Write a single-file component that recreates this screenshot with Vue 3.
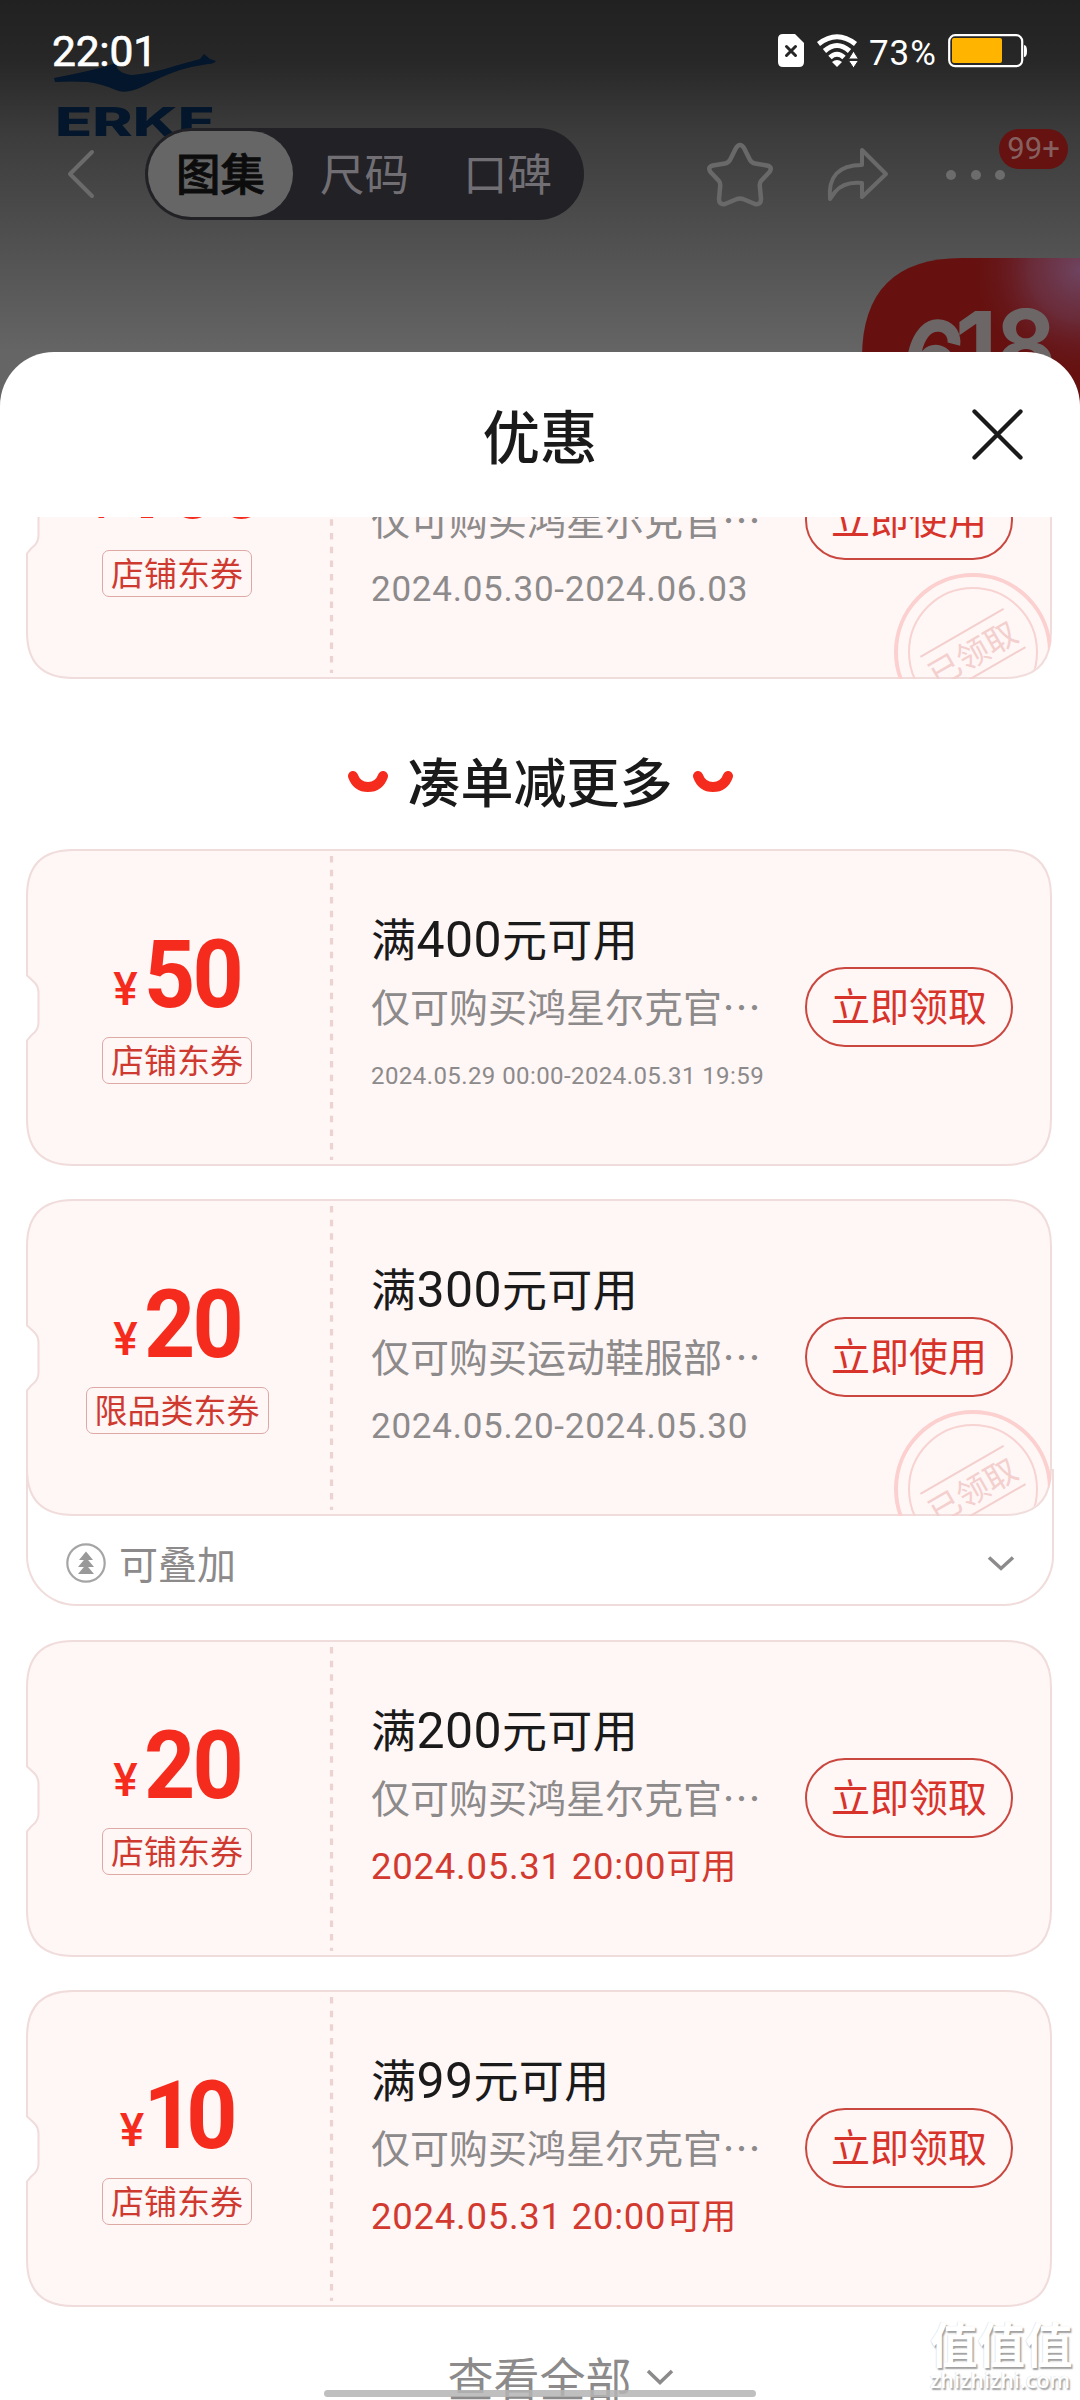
<script setup>
const store = '店铺东券'
const shopDesc = '仅可购买鸿星尔克官…'

const claimed = {
  amount: '100', tag: store, min: '500', desc: shopDesc,
  date: '2024.05.30-2024.06.03', kind: 'range', action: '立即使用', stamped: true,
}

const coupons = [
  { amount: '50', tag: store, min: '400', desc: shopDesc, date: '2024.05.29 00:00-2024.05.31 19:59', kind: 'small', action: '立即领取' },
  { amount: '20', tag: '限品类东券', min: '300', desc: '仅可购买运动鞋服部…', date: '2024.05.20-2024.05.30', kind: 'range', action: '立即使用', stamped: true, stack: '可叠加' },
  { amount: '20', tag: store, min: '200', desc: shopDesc, date: '2024.05.31 20:00', suffix: '可用', kind: 'soon', action: '立即领取' },
  { amount: '10', tag: store, min: '99', desc: shopDesc, date: '2024.05.31 20:00', suffix: '可用', kind: 'soon', action: '立即领取' },
]

const groups = [
  { items: [claimed], first: true },
  { title: '凑单减更多', items: coupons },
]
</script>

<template>
  <div class="screen" lang="zh-CN">
    <svg class="brand" width="170" height="90" viewBox="0 0 170 90">
      <path d="M4 27Q30 22 50 17L66 12Q66 22 82 24Q104 22 128 14L150 8L154 3L160 8L166 10Q164 13 158 13Q144 15 130 19Q112 25 96 34Q86 39 80 40Q72 42 66 39Q52 33 38 31Q20 30 5 31Z" />
      <text x="5" y="85" textLength="160" lengthAdjust="spacingAndGlyphs">ERKE</text>
    </svg>

    <div class="promo">
      <svg width="218" height="146" viewBox="0 0 218 146">
        <defs>
          <radialGradient id="promoGlow" cx="218" cy="12" r="110" gradientUnits="userSpaceOnUse">
            <stop offset="0" stop-color="#6e4460" />
            <stop offset=".45" stop-color="#6b3040" stop-opacity=".85" />
            <stop offset="1" stop-color="#661110" stop-opacity="0" />
          </radialGradient>
        </defs>
        <path d="M0 146V100Q0 0 100 0H218V146Z" fill="#661110" />
        <path d="M0 146V100Q0 0 100 0H218V146Z" fill="url(#promoGlow)" />
        <g class="promo-num">
          <text transform="translate(34 124) rotate(15) scale(.9 1)">6</text>
          <text transform="translate(93 124)">1</text>
          <text transform="translate(134 122) scale(.94 1)">8</text>
        </g>
      </svg>
    </div>

    <header class="hero">
      <div class="status">
        <span class="clock">22:01</span>
        <div class="indicators">
          <svg width="26" height="34" viewBox="0 0 26 34">
            <path d="M5 0H17L26 9V28Q26 33 21 33H5Q0 33 0 28V5Q0 0 5 0Z" fill="#fff" />
            <path d="M8.500 12.500L17.500 21.500M17.500 12.500L8.500 21.500" stroke="#262626" stroke-width="3" stroke-linecap="round" />
          </svg>
          <svg class="wifi" width="41" height="34" viewBox="0 0 41 34">
            <g fill="none" stroke="#fff" stroke-width="5">
              <path d="M1.500 10Q20 -4.500 38.500 10" />
              <path d="M7.500 17Q20 6 32.500 17" />
              <path d="M13 23.500Q20 17 27 23.500" />
            </g>
            <path d="M15 28Q20 24 25 28L20 33Z" fill="#fff" />
            <path d="M31.500 25L36.500 17L41.500 25ZM31.500 26.500H41.500L36.500 34Z" fill="#fff" stroke="#292929" />
          </svg>
          <span class="pct">73%</span>
          <svg width="80" height="34" viewBox="0 0 80 34">
            <rect x="1.200" y="1.200" width="73" height="31" rx="6" fill="none" stroke="#fff" stroke-width="2.200" />
            <rect x="4" y="4" width="50" height="25" rx="2" fill="#ffb400" />
            <path d="M76 11Q79 11 79 17Q79 23 76 23Z" fill="#fff" />
          </svg>
        </div>
      </div>

      <nav class="bar">
        <svg class="back" width="28" height="50" viewBox="0 0 28 50">
          <path d="M25 3L3 25L25 47" fill="none" stroke="#6b6b6b" stroke-width="4" stroke-linecap="round" stroke-linejoin="round" />
        </svg>
        <div class="tabs">
          <span class="tab on">图集</span>
          <span class="tab">尺码</span>
          <span class="tab">口碑</span>
        </div>
        <svg class="star" width="68" height="66" viewBox="0 0 68 66">
          <path d="M30 6Q34 0 38 6L44 18Q46 21 49 21.500L61 23.500Q67 25 63.500 30L55 39Q53.500 41 53.800 44L55 57Q55 63 49 62L37 57Q34 56 31 57L19 62Q13 63 13 57L14.200 44Q14.500 41 13 39L4.500 30Q1 25 7 23.500L19 21.500Q22 21 24 18Z" fill="none" stroke="#696969" stroke-width="4.500" stroke-linejoin="round" />
        </svg>
        <svg class="share" width="64" height="56" viewBox="0 0 64 56">
          <path d="M36 3L60 27L36 50V36Q18 34 9 45L4 52Q1 18 36 18Z" fill="none" stroke="#696969" stroke-width="4" stroke-linejoin="round" />
        </svg>
        <div class="more">
          <i></i><i></i><i></i>
          <b class="count">99+</b>
        </div>
      </nav>
    </header>

    <section class="sheet">
      <div class="sheet-head">
        <h1>优惠</h1>
        <svg class="close" width="54" height="54" viewBox="0 0 54 54">
          <path d="M4.500 4.500L50.500 50.500M50.500 4.500L4.500 50.500" stroke="#1a1a1a" stroke-width="4.300" stroke-linecap="round" />
        </svg>
      </div>

      <div class="list">
        <div v-for="(g, gi) in groups" :key="gi" class="group" :class="{ first: g.first }">
          <h2 v-if="g.title">
            <svg width="42" height="22" viewBox="0 0 42 22"><path d="M6 5Q10 16 21 16Q32 16 36 5" /></svg>
            <span>{{ g.title }}</span>
            <svg width="42" height="22" viewBox="0 0 42 22"><path d="M6 5Q10 16 21 16Q32 16 36 5" /></svg>
          </h2>
          <div v-for="(c, i) in g.items" :key="i" class="wrap" :class="{ stacked: c.stack }">
            <article class="coupon">
              <svg class="shape" width="1026" height="317" viewBox="0 0 1026 317">
                <path d="M47 1H979Q1025 1 1025 47V270Q1025 316 979 316H47Q1 316 1 270V191.500Q5 186 9 183Q12.500 179 12.500 173V144Q12.500 138 9 134Q5 130 1 126.500V47Q1 1 47 1Z" fill="#fff6f6" stroke="#f0dcdb" stroke-width="2" />
                <path d="M305.500 7V311" stroke="#ecd3d0" stroke-width="3.200" stroke-dasharray="6.500 7.170" />
              </svg>
              <div v-if="c.stamped" class="stamp-clip">
                <svg class="stamp" width="160" height="160" viewBox="-80 -80 160 160">
                  <circle r="77" stroke="#fbd0ce" stroke-width="4" />
                  <circle r="64" stroke="#f7d3d1" stroke-width="2" />
                  <g transform="rotate(-30)">
                    <path d="M-48 -22H48M-48 22H48" stroke="#f3cfcd" stroke-width="2" />
                    <text x="-1" y="13" text-anchor="middle">已领取</text>
                  </g>
                </svg>
              </div>
              <div class="left">
                <div class="price">
                  <span class="yen">¥</span><span class="num" :class="'n' + c.amount">{{ c.amount }}</span>
                </div>
                <span class="tag">{{ c.tag }}</span>
              </div>
              <div class="info">
                <div class="cond">满<span>{{ c.min }}</span>元可用</div>
                <div class="desc">{{ c.desc }}</div>
                <div class="date" :class="c.kind">{{ c.date }}<em v-if="c.suffix">{{ c.suffix }}</em></div>
              </div>
              <button>{{ c.action }}</button>
            </article>
            <div v-if="c.stack" class="stack">
              <svg width="40" height="40" viewBox="0 0 40 40">
                <circle cx="20" cy="20" r="18.700" fill="none" stroke="#a5a5a5" stroke-width="2.200" />
                <path d="M20 8.500L27 17H13ZM20 14.500L28 24H12ZM20 21.500L28 31H12Z" fill="#999" />
              </svg>
              <span>{{ c.stack }}</span>
              <svg class="down" width="28" height="17" viewBox="0 0 28 17"><path d="M2 2.500L14 13.500L26 2.500" /></svg>
            </div>
          </div>
        </div>
        <div class="all">
          <span>查看全部</span>
          <svg width="28" height="17" viewBox="0 0 28 17"><path d="M2 2L14 13.500L26 2" /></svg>
        </div>
      </div>
    </section>

    <div class="home"></div>
    <div class="mark">
      <div class="mark-cn">值值值</div>
      <div class="mark-en">zhizhizhi.com</div>
    </div>
  </div>
</template>

<style>
body {
  margin: 0;
  background: #fff;
}
</style>

<style scoped>
.screen {
  position: relative;
  display: flex;
  flex-direction: column;
  width: 1080px;
  height: 2400px;
  overflow: hidden;
  background: linear-gradient(#212121 0, #272727 60px, #3b3b3b 130px, #4c4c4c 220px, #656565 352px, #666 420px);
  font-family: Roboto, "Noto Sans CJK SC", sans-serif;
  color: #1a1a1a;
}
.brand {
  position: absolute;
  left: 50px;
  top: 51px;
}
.brand path, .brand text { fill: #03162b; }
.brand text {
  font: 800 39px Inter, sans-serif;
}
.promo {
  position: absolute;
  left: 862px;
  top: 258px;
}
.promo svg { display: block; }
.promo-num {
  font: 700 98px Inter, sans-serif;
  fill: #6c6666;
}
.hero {
  position: relative;
  height: 352px;
  flex: none;
}
.status {
  display: flex;
  justify-content: space-between;
  align-items: center;
  height: 68px;
  padding: 17px 52px 0;
  box-sizing: border-box;
  margin-bottom: 60px;
}
.clock {
  font-size: 42.500px;
  line-height: 50px;
  letter-spacing: -.2px;
  font-weight: 400;
  -webkit-text-stroke: .7px #fff;
  color: #fff;
  padding-top: 18px;
}
.indicators {
  display: flex;
  align-items: center;
  padding-top: 16px;
}
.wifi { margin-left: 13px; }
.pct {
  width: 79px;
  color: #fff;
  font-size: 35px;
  line-height: 34px;
  padding-top: 7px;
  margin-left: 11px;
  letter-spacing: .9px;
}
.bar {
  display: flex;
  align-items: center;
  height: 92px;
  padding-left: 67px;
}
.tabs {
  display: flex;
  align-items: center;
  box-sizing: border-box;
  width: 439px;
  height: 92px;
  margin-left: 50px;
  padding: 0 3px;
  border-radius: 46px;
  background: #222126;
}
.tab {
  width: 143px;
  height: 86px;
  text-align: center;
  font-size: 44.500px;
  line-height: 91px;
  color: #716f74;
}
.tab.on {
  width: 145px;
  border-radius: 43px;
  background: #666;
  color: #0c0c0c;
  font-weight: 500;
  -webkit-text-stroke: .8px #0c0c0c;
}
.star { margin: 2px 0 0 122px; }
.share { margin: 2px 0 0 52px; }
.more {
  position: relative;
  display: flex;
  gap: 14.500px;
  margin-left: 56px;
  margin-top: 1px;
}
.more i {
  width: 10px;
  height: 10px;
  border-radius: 50%;
  background: #6c6c6c;
}
.count {
  position: absolute;
  left: 53px;
  bottom: 11px;
  width: 69px;
  height: 40px;
  border-radius: 20px;
  background: #651211;
  color: #85605f;
  font: 400 31px/40px Roboto, sans-serif;
  text-align: center;
}
.sheet {
  position: relative;
  flex: 1;
  min-height: 0;
  display: flex;
  flex-direction: column;
  border-radius: 54px 54px 0 0;
  background: #fff;
}
.sheet-head {
  position: relative;
  height: 165px;
  flex: none;
}
h1 {
  margin: 0;
  padding-top: 46px;
  text-align: center;
  font-size: 57.500px;
  line-height: 84px;
  font-weight: 500;
}
.close {
  position: absolute;
  left: 970px;
  top: 55px;
}
.list {
  flex: 1;
  min-height: 0;
  overflow: hidden;
  padding: 0 28px 0 26px;
}
.group.first { margin-top: -155px; }
h2 {
  display: flex;
  justify-content: center;
  align-items: center;
  height: 170px;
  margin: 0;
  padding-left: 2px;
  font-size: 53px;
  line-height: 70px;
  font-weight: 500;
  gap: 19px;
}
h2 span { margin-top: 41px; }
h2 svg { margin-top: 35px; }
h2 svg path {
  fill: none;
  stroke: #f52c1d;
  stroke-width: 10;
  stroke-linecap: round;
}
.wrap { margin-bottom: 33px; }
.group.first .wrap { margin-bottom: 0; }
.stacked {
  position: relative;
  margin-bottom: 34px;
}
.stacked::after {
  content: "";
  position: absolute;
  left: 0;
  right: -2px;
  top: 270px;
  bottom: 0;
  box-sizing: border-box;
  border: 2px solid #f0dcdb;
  border-top: 0;
  border-radius: 0 0 50px 50px;
}
.coupon {
  position: relative;
  display: flex;
  height: 317px;
}
.shape {
  position: absolute;
  inset: 0;
}
.stamp-clip {
  position: absolute;
  inset: 0;
  overflow: hidden;
  border-radius: 46px;
}
.stamp {
  position: absolute;
  left: 867px;
  top: 210px;
  fill: none;
}
.stamp text {
  fill: #f3cfcd;
  font-size: 32px;
}
.left {
  position: relative;
  width: 302px;
  display: flex;
  flex-direction: column;
  align-items: center;
}
.price {
  display: flex;
  align-items: baseline;
  height: 102px;
  margin-top: 86px;
  color: #f52c1d;
  line-height: 80px;
}
.first .price {
  height: 104px;
  margin-top: 84px;
}
.yen {
  position: relative;
  top: -2px;
  font-size: 46px;
  font-weight: 500;
  margin-right: 2px;
}
.first .yen { top: 0; }
.num {
  font-size: 94px;
  font-weight: 700;
  letter-spacing: -3px;
  margin-left: -1px;
  transform: scaleX(.95);
  transform-origin: right;
}
.n10 {
  letter-spacing: -9px;
  margin: 0 5px 0 -7px;
}
.n100 {
  letter-spacing: -1.500px;
  margin-left: -8px;
  transform: scaleX(.93);
}
.tag {
  box-sizing: border-box;
  height: 47px;
  padding: 0 8px;
  border: 1px solid #dda9a5;
  border-radius: 7px;
  color: #cf3a30;
  font-size: 33px;
  line-height: 47px;
}
.info {
  position: relative;
  width: 433px;
  margin-left: 43px;
  white-space: nowrap;
}
.cond {
  margin-top: 57px;
  height: 65px;
  line-height: 68px;
  font-size: 45px;
  letter-spacing: .4px;
}
.cond span { font-size: 50px; }
.desc {
  height: 71px;
  line-height: 68px;
  font-family: "Noto Sans CJK SC", sans-serif;
  font-size: 39px;
  color: #8c8a8a;
}
.date {
  height: 68px;
  line-height: 68px;
  color: #8c8a8a;
}
.range { font-size: 35px; letter-spacing: .75px; padding-top: 1px; }
.small { font-size: 24px; letter-spacing: .42px; }
.soon { font-size: 36.500px; letter-spacing: .75px; color: #d2392f; }
.soon em { font-style: normal; font-size: 35px; letter-spacing: 0; }
button {
  position: relative;
  box-sizing: border-box;
  width: 208px;
  height: 80px;
  margin: 118px 0 0 1px;
  padding: 0 0 6px;
  border: 2px solid #c9473e;
  border-radius: 40px;
  background: none;
  color: #d8332a;
  font: 400 39px/70px "Noto Sans CJK SC", sans-serif;
  white-space: nowrap;
}
.stack {
  display: flex;
  align-items: center;
  height: 90px;
  padding: 4px 37px 0 40px;
  box-sizing: border-box;
  color: #8c8a8a;
  font-size: 39px;
}
.stack span {
  flex: 1;
  padding: 0 0 3px 13px;
}
.down path, .all path {
  fill: none;
  stroke: #8c8a8a;
  stroke-width: 3.500;
}
.all {
  display: flex;
  justify-content: center;
  align-items: center;
  gap: 14px;
  padding: 6px 0 0 43px;
  color: #8c8a8a;
  font-size: 46px;
  line-height: 68px;
}
.all svg { margin-top: -6px; }
.home {
  position: absolute;
  left: 324px;
  top: 2390px;
  width: 432px;
  height: 7px;
  border-radius: 4px;
  background: rgba(180, 180, 180, .85);
}
.mark {
  position: absolute;
  left: 930px;
  top: 2314px;
  width: 144px;
  color: #fff;
  text-shadow: 1.500px 1.500px 1.500px #a0a0a0, -.5px -.5px 1px #ddd;
}
.mark-cn {
  font-family: "Noto Sans CJK SC", sans-serif;
  font-size: 47.500px;
  font-weight: 700;
  line-height: 58px;
}
.mark-en {
  font: 600 21.500px/22px "Open Sans", sans-serif;
  margin-top: -3px;
}
</style>
